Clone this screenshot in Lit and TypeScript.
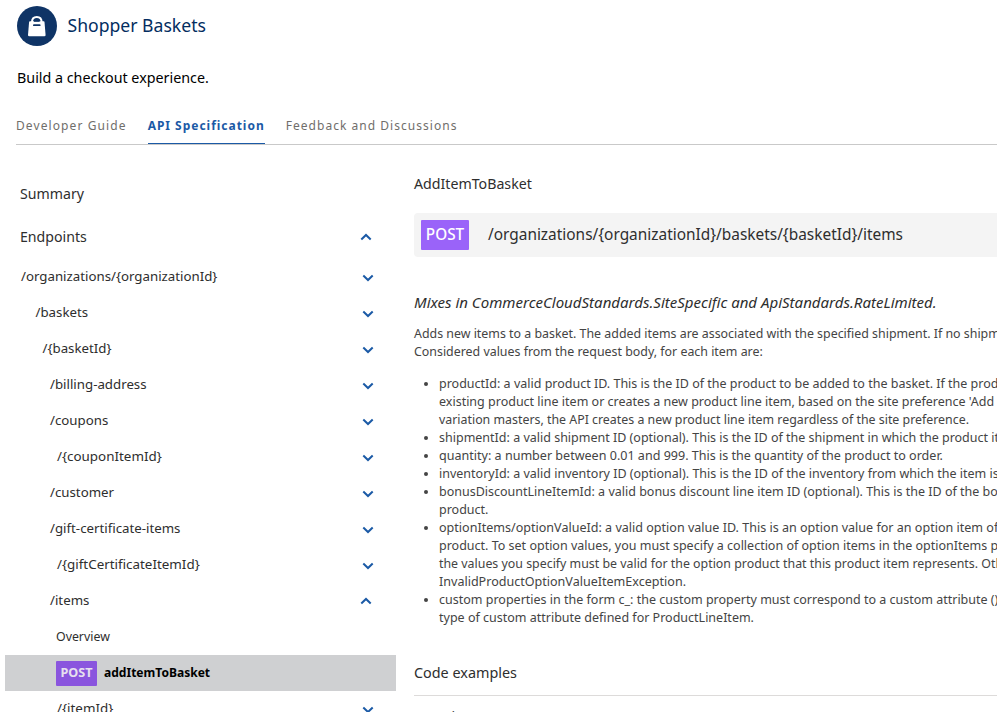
import { LitElement, html, css } from 'lit';
import { customElement } from 'lit/decorators.js';
import { classMap } from 'lit/directives/class-map.js';

type Row = { label: string; indent: number; open?: boolean; wide?: boolean };

const ROWS: Row[] = [
  { label: '/organizations/{organizationId}', indent: 16 },
  { label: '/baskets', indent: 30.5 },
  { label: '/{basketId}', indent: 37.5 },
  { label: '/billing-address', indent: 45 },
  { label: '/coupons', indent: 45 },
  { label: '/{couponItemId}', indent: 52, wide: true },
  { label: '/customer', indent: 45 },
  { label: '/gift-certificate-items', indent: 45 },
  { label: '/{giftCertificateItemId}', indent: 52, wide: true },
  { label: '/items', indent: 45, open: true },
];

type Line = { text: string; tight?: boolean; loose?: boolean };

const ITEMS: Line[][] = [
  [
    { text: 'productId: a valid product ID. This is the ID of the product to be added to the basket. If the product' },
    { text: "existing product line item or creates a new product line item, based on the site preference 'Add Product" },
    { text: 'variation masters, the API creates a new product line item regardless of the site preference.', tight: true },
  ],
  [{ text: 'shipmentId: a valid shipment ID (optional). This is the ID of the shipment in which the product item' }],
  [{ text: 'quantity: a number between 0.01 and 999. This is the quantity of the product to order.', loose: true }],
  [{ text: 'inventoryId: a valid inventory ID (optional). This is the ID of the inventory from which the item is' }],
  [
    { text: 'bonusDiscountLineItemId: a valid bonus discount line item ID (optional). This is the ID of the bonus' },
    { text: 'product.' },
  ],
  [
    { text: 'optionItems/optionValueId: a valid option value ID. This is an option value for an option item of', loose: true },
    { text: 'product. To set option values, you must specify a collection of option items in the optionItems property.' },
    { text: 'the values you specify must be valid for the option product that this product item represents. Otherwise,', tight: true },
    { text: 'InvalidProductOptionValueItemException.', loose: true },
  ],
  [
    { text: 'custom properties in the form c_: the custom property must correspond to a custom attribute ()' },
    { text: 'type of custom attribute defined for ProductLineItem.' },
  ],
];

const chevron = (up: boolean) => html`
  <svg class=${classMap({ chevron: true, up })} viewBox="0 0 12 8" width="12" height="8">
    <path d="M1.3 1.5 L6 6 L10.7 1.5" />
  </svg>`;

@customElement('app-root')
export class AppRoot extends LitElement {
  static styles = css`
    :host { display: block; width: 100%; height: 712px; overflow: hidden; background: #fff; color: #2e2e2e;
      font-family: 'Noto Sans', sans-serif; white-space: nowrap; }
    * { box-sizing: border-box; }
    .brand { display: flex; align-items: center; gap: 10.5px; padding: 6px 0 0 17px; height: 46px; }
    .brand svg { flex: none; }
    .title { color: #032d60; font-size: 17.6px; line-height: 24px; padding-bottom: 2px; }
    .tagline { padding: 22px 0 0 17px; height: 60px; font-size: 14.3px; line-height: 20px; color: #000; }
    .tabs { display: flex; gap: 21px; margin-left: 16px; height: 39px; border-bottom: 1px solid #c9c9c9;
      font-size: 12px; letter-spacing: 1.03px; color: #706e6b; line-height: 18px; }
    .tab { height: 38px; padding-top: 11px; }
    .tab:first-child { letter-spacing: 1.1px; }
    .tab.active { font-weight: 700; letter-spacing: 0.98px; color: #1b5aa6; border-bottom: 1px solid #1b5aa6; }
    .columns { display: flex; }
    .side { width: 396px; flex: none; padding: 27px 0 0 5px; }
    .head, .row { display: flex; align-items: center; justify-content: space-between; padding-right: 23px; }
    .head { height: 43px; padding-left: 15px; font-size: 14.15px; }
    .row { height: 36px; font-size: 13.27px; }
    .wide { font-size: 13.4px; }
    .chevron { flex: none; margin-top: 3px; margin-right: -1px; fill: none; stroke: #1b5aa6; stroke-width: 2; }
    .chevron.up { margin: 1px 1px 0 0; transform: rotate(180deg); }
    .overview { height: 37px; padding-left: 51px; padding-bottom: 1px; font-size: 12.35px; }
    .selected { justify-content: flex-start; gap: 7px; padding-left: 51px; background: #cfd0d2; font-weight: 700;
      font-size: 12.05px; color: #000; }
    .selected .op { padding-bottom: 1px; }
    .tag { width: 41px; height: 25px; line-height: 24px; text-align: center; background: #8a55de; color: #e6e0ee;
      border-radius: 1px; font-size: 12.6px; }
    .last { padding-left: 52px; padding-bottom: 2px; font-size: 13.4px; }
    .main { flex: 1; min-width: 0; padding: 29px 0 0 18px; overflow: hidden; }
    .name { font-size: 14.2px; line-height: 20px; }
    .endpoint { display: flex; align-items: center; gap: 19px; height: 44px; margin-top: 19px; padding-left: 7px;
      background: #f4f4f4; border-radius: 4px 0 0 4px; font-size: 15.41px; }
    .path { padding-bottom: 1px; }
    .method { width: 48px; height: 30px; line-height: 29px; text-align: center; background: #9a63f9; color: #fff;
      font-size: 15.3px; font-weight: 500; border-radius: 1px; }
    .mixes { margin-top: 35px; font-size: 15.04px; font-style: italic; line-height: 20px; }
    .copy { color: #444; font-size: 12.5px; line-height: 18px; }
    .intro { margin-top: 13px; font-size: 12.4px; }
    .list { margin: 14px 0 0; padding: 0 0 0 25px; }
    .line { display: block; }
    .tight { font-size: 12.38px; }
    .loose { font-size: 12.56px; }
    .section { margin-top: 36px; height: 33px; border-bottom: 1px solid #dddbda; font-size: 14.38px; line-height: 20px; }
    .sample { margin-top: 11px; font-size: 14.1px; line-height: 20px; color: #444; }
  `;

  render() {
    return html`
      <div class="brand">
        <svg width="40" height="40" viewBox="0 0 40 40">
          <circle cx="20" cy="20" r="20" fill="#0f3466" />
          <path d="M15 16 C15 12.6 16.8 10.9 19.8 10.9 C22.8 10.9 24.6 12.6 24.6 16" fill="none" stroke="#fff" stroke-width="2" />
          <path d="M13 15.2 H26.6 Q27.4 15.2 27.5 16 L28.6 28.9 Q28.6 30.2 27.3 30.2 H12.3 Q11 30.2 11 28.9 L12.1 16 Q12.2 15.2 13 15.2 Z" fill="#fff" />
          <path d="M17 15 H22.6" stroke="#0f3466" stroke-width="1.6" />
          <path d="M16.9 19.2 H22.7" stroke="#0f3466" stroke-width="1.8" stroke-linecap="round" />
        </svg>
        <div class="title">Shopper Baskets</div>
      </div>
      <div class="tagline">Build a checkout experience.</div>
      <div class="tabs">
        <div class="tab">Developer Guide</div>
        <div class="tab active">API Specification</div>
        <div class="tab">Feedback and Discussions</div>
      </div>
      <div class="columns">
        <nav class="side">
          <div class="head">Summary</div>
          <div class="head">Endpoints ${chevron(true)}</div>
          ${ROWS.map((r) => html`<div class=${classMap({ row: true, wide: !!r.wide })} style="padding-left:${r.indent}px">${r.label} ${chevron(!!r.open)}</div>`)}
          <div class="row overview">Overview</div>
          <div class="row selected"><span class="tag">POST</span><span class="op">addItemToBasket</span></div>
          <div class="row last">/{itemId} ${chevron(false)}</div>
        </nav>
        <main class="main">
          <div class="name">AddItemToBasket</div>
          <div class="endpoint">
            <span class="method">POST</span>
            <span class="path">/organizations/{organizationId}/baskets/{basketId}/items</span>
          </div>
          <div class="mixes">Mixes in CommerceCloudStandards.SiteSpecific and ApiStandards.RateLimited.</div>
          <div class="copy intro">
            <span class="line">Adds new items to a basket. The added items are associated with the specified shipment. If no shipment</span>
            <span class="line">Considered values from the request body, for each item are:</span>
          </div>
          <ul class="copy list">
            ${ITEMS.map((lines) => html`<li>${lines.map((l) => html`<span class=${classMap({ line: true, tight: !!l.tight, loose: !!l.loose })}>${l.text}</span>`)}</li>`)}
          </ul>
          <div class="section">Code examples</div>
          <div class="sample">Sample</div>
        </main>
      </div>`;
  }
}
